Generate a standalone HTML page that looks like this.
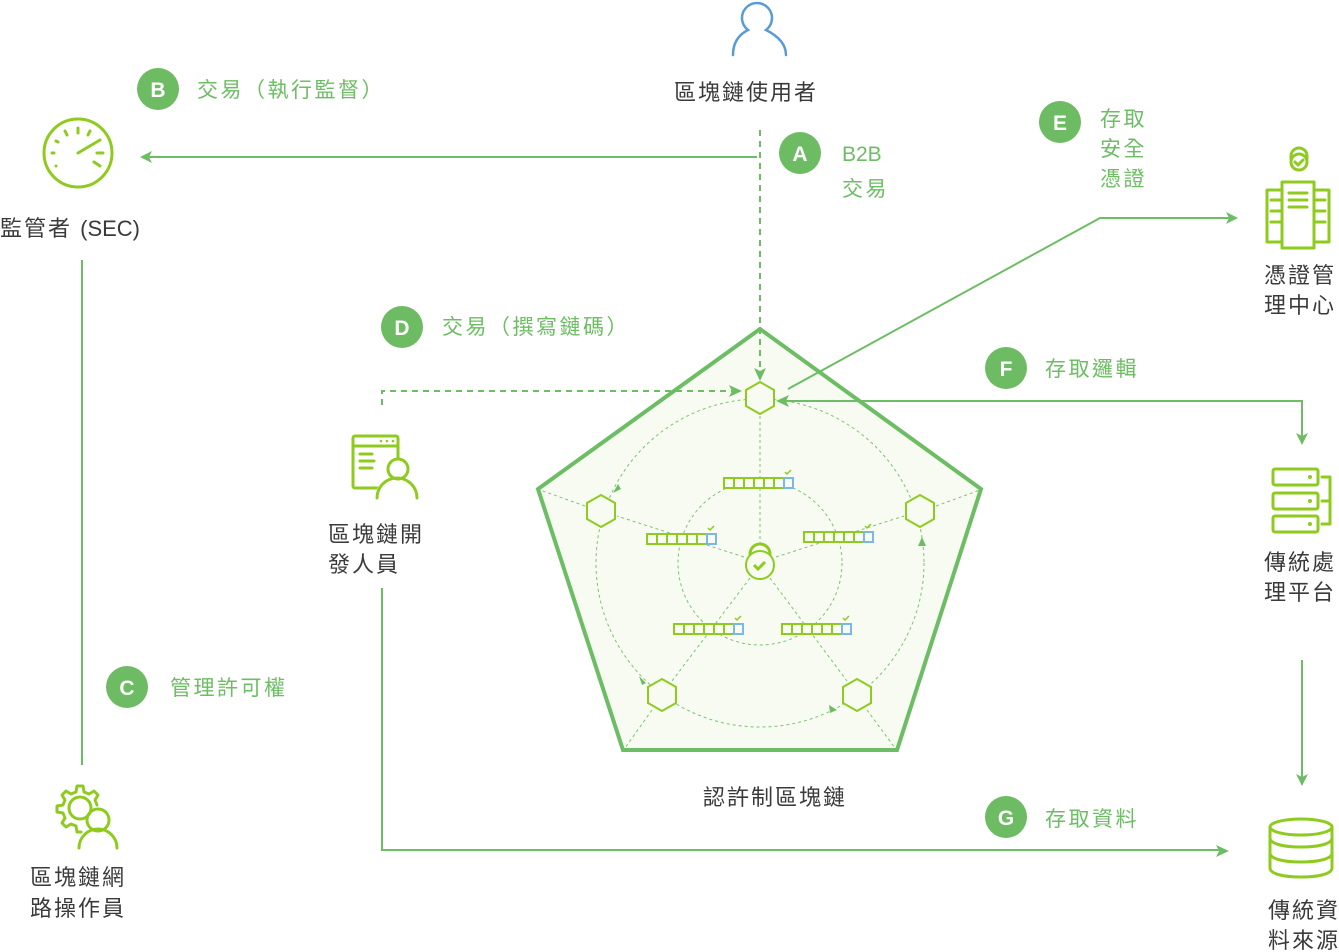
<!DOCTYPE html>
<html><head><meta charset="utf-8"><style>
html,body{margin:0;padding:0;background:#fff;width:1339px;height:952px;overflow:hidden}
svg{display:block}
text{font-family:"Liberation Sans","Noto Sans CJK TC",sans-serif}
.d{fill:#3a3a3a;font-size:22px;letter-spacing:2px}
.g{fill:#6cbd63;font-size:21px;letter-spacing:2.5px}
.bt{fill:#fff;font-size:21px;font-weight:bold;text-anchor:middle}
.ic{fill:none;stroke:#8fcb1f;stroke-width:3;stroke-linecap:round;stroke-linejoin:round}
.ln{fill:none;stroke:#6cbd63;stroke-width:2}
.ds{fill:none;stroke:#6cbd63;stroke-width:2;stroke-dasharray:6 5}
.th{fill:none;stroke:#7cc46f;stroke-width:1;stroke-dasharray:3 3}
.hx{fill:#f7fbf2;stroke:#8fcb1f;stroke-width:2}
.ar{fill:#6cbd63}
</style></head><body>
<svg width="1339" height="952" viewBox="0 0 1339 952">
<polygon points="760,329 981,489 897,750 623,750 538,489" fill="#f7fbf2" stroke="#6cbd63" stroke-width="4"/>
<circle cx="760" cy="563" r="82" class="th"/>
<circle cx="760" cy="563" r="164" class="th"/>
<g class="th">
<line x1="760" y1="545" x2="760" y2="414"/>
<line x1="744" y1="557" x2="617" y2="516"/>
<line x1="776" y1="557" x2="904" y2="516"/>
<line x1="750" y1="578" x2="672" y2="681"/>
<line x1="770" y1="578" x2="847" y2="681"/>
<line x1="585" y1="506" x2="540" y2="490"/>
<line x1="936" y1="506" x2="980" y2="490"/>
<line x1="652" y1="710" x2="625" y2="748"/>
<line x1="867" y1="710" x2="895" y2="748"/>
</g>
<polygon class="ar" points="613,493 618,484 621,489"/>
<polygon class="ar" points="922,537 918,546 926,546"/>
<polygon class="ar" points="646,683 639,676 642,685"/>
<polygon class="ar" points="837,710 829,705 830,713"/>
<g class="hx">
<polygon points="760,382 774,390 774,406 760,414 746,406 746,390"/>
<polygon points="601,495 615,503 615,519 601,527 587,519 587,503"/>
<polygon points="920,495 934,503 934,519 920,527 906,519 906,503"/>
<polygon points="662,679 676,687 676,703 662,711 648,703 648,687"/>
<polygon points="857,679 871,687 871,703 857,711 843,703 843,687"/>
</g>
<path d="M750,560 v-6 a10,10 0 0 1 20,0 v6" fill="none" stroke="#8fcb1f" stroke-width="3"/>
<circle cx="760" cy="565" r="14" fill="#f7fbf2" stroke="#8fcb1f" stroke-width="2"/>
<path d="M754,565 l4,4 l7,-7" fill="none" stroke="#8fcb1f" stroke-width="3"/>
<defs>
<g id="ch">
<rect x="0" y="0" width="69" height="10" fill="#f7fbf2"/>
<rect x="0" y="0" width="60" height="10" fill="none" stroke="#8fcb1f" stroke-width="2"/>
<path d="M10,0v10M20,0v10M30,0v10M40,0v10M50,0v10" stroke="#8fcb1f" stroke-width="2"/>
<rect x="60" y="0" width="9" height="10" fill="none" stroke="#7ab8e8" stroke-width="2"/>
<path d="M61,-6 l2,2 l4,-4" fill="none" stroke="#8fcb1f" stroke-width="1.5"/>
</g>
</defs>
<use href="#ch" x="724" y="478"/>
<use href="#ch" x="647" y="534"/>
<use href="#ch" x="804" y="532"/>
<use href="#ch" x="674" y="624"/>
<use href="#ch" x="782" y="624"/>

<line class="ln" x1="757" y1="157" x2="146" y2="157"/>
<polygon class="ar" points="140,157 152,151 149,157 152,163"/>
<line class="ds" x1="760" y1="130" x2="760" y2="372"/>
<polygon class="ar" points="760,381 754,368 760,371 766,368"/>
<path class="ds" d="M382,405 V391 H732"/>
<polygon class="ar" points="742,391 729,385 732,391 729,397"/>
<path class="ln" d="M788,389 L1100,218 H1230"/>
<polygon class="ar" points="1238,218 1226,212 1229,218 1226,224"/>
<path class="ln" d="M784,401 H1302 V437"/>
<polygon class="ar" points="776,401 789,395 786,401 789,407"/>
<polygon class="ar" points="1302,445 1296,433 1302,436 1308,433"/>
<line class="ln" x1="1302" y1="660" x2="1302" y2="778"/>
<polygon class="ar" points="1302,786 1296,774 1302,777 1308,774"/>
<path class="ln" d="M382,588 V850 H1220"/>
<polygon class="ar" points="1229,851 1216,845 1219,851 1216,857"/>
<line class="ln" x1="82" y1="260" x2="82" y2="765"/>

<g fill="#6dbb63">
<circle cx="158" cy="89" r="21"/><circle cx="800" cy="153" r="21"/><circle cx="1060" cy="122" r="21"/>
<circle cx="402" cy="327" r="21"/><circle cx="1006" cy="368" r="21"/><circle cx="127" cy="687" r="21"/><circle cx="1006" cy="817" r="21"/>
</g>
<text class="bt" x="158" y="97">B</text><text class="bt" x="800" y="161">A</text><text class="bt" x="1060" y="130">E</text>
<text class="bt" x="402" y="335">D</text><text class="bt" x="1006" y="376">F</text><text class="bt" x="127" y="695">C</text><text class="bt" x="1006" y="825">G</text>
<text class="g" x="197" y="97">交易（執行監督）</text>
<text class="g" x="842" y="161" style="letter-spacing:0">B2B</text><text class="g" x="842" y="196">交易</text>
<text class="g" x="1100" y="126">存取</text><text class="g" x="1100" y="156">安全</text><text class="g" x="1100" y="186">憑證</text>
<text class="g" x="442" y="334">交易（撰寫鏈碼）</text>
<text class="g" x="1045" y="376">存取邏輯</text>
<text class="g" x="170" y="695">管理許可權</text>
<text class="g" x="1045" y="826">存取資料</text>

<text class="d" x="674" y="100">區塊鏈使用者</text>
<text class="d" x="0" y="236">監管者 <tspan style="letter-spacing:0">(SEC)</tspan></text>
<text class="d" x="328" y="542">區塊鏈開</text><text class="d" x="328" y="572">發人員</text>
<text class="d" x="703" y="805">認許制區塊鏈</text>
<text class="d" x="30" y="885">區塊鏈網</text><text class="d" x="30" y="916">路操作員</text>
<text class="d" x="1264" y="283">憑證管</text><text class="d" x="1264" y="313">理中心</text>
<text class="d" x="1264" y="570">傳統處</text><text class="d" x="1264" y="600">理平台</text>
<text class="d" x="1268" y="918">傳統資</text><text class="d" x="1268" y="948">料來源</text>

<g fill="none" stroke="#5b9bd5" stroke-width="2.5" stroke-linecap="round">
<path d="M733,55 C733,43 738,35 748,30 A15,15 0 1 1 766,30 C776,35 786,43 786,55"/>
</g>
<g class="ic">
<circle cx="78" cy="153" r="34"/>
<line x1="78" y1="153" x2="100" y2="140"/>
<line x1="78" y1="128" x2="78" y2="133"/><line x1="90" y1="131" x2="88" y2="135"/>
<line x1="65" y1="131" x2="67" y2="135"/><line x1="56" y1="141" x2="58" y2="142"/>
<line x1="52" y1="153" x2="54" y2="153"/><line x1="56" y1="166" x2="56" y2="166"/>
<line x1="97" y1="153" x2="103" y2="153"/><line x1="94" y1="162" x2="100" y2="166"/>
</g>
<g class="ic" stroke-width="2.5">
<path d="M97,805 l-2,-5 l3,-5 l-4,-4 l-5,3 l-5,-2 l-1,-6 h-6 l-1,6 l-5,2 l-5,-3 l-4,4 l3,5 l-2,5 l-6,1 v6 l6,1 l2,5 l-3,5 l4,4 l5,-3 l5,2 l1,6 h4"/>
<circle cx="80" cy="808" r="11"/>
<circle cx="98" cy="820" r="11"/>
<path d="M79,848 a19,19 0 0 1 38,0"/>
</g>
<g class="ic" stroke-width="2.5">
<rect x="353" y="436" width="45" height="52" rx="2"/>
<line x1="353" y1="446" x2="398" y2="446"/>
<line x1="360" y1="454" x2="372" y2="454"/><line x1="360" y1="461" x2="374" y2="461"/><line x1="360" y1="468" x2="372" y2="468"/>
</g>
<circle cx="398" cy="469" r="11" fill="#fff"/>
<path d="M374,500 a22,22 0 0 1 44,0 z" fill="#fff"/>
<g class="ic" stroke-width="2.5">
<circle cx="398" cy="469" r="10"/>
<path d="M377,498 a20,20 0 0 1 40,0"/>
</g>
<g fill="#8fcb1f"><circle cx="381" cy="441" r="1.3"/><circle cx="387" cy="441" r="1.3"/><circle cx="393" cy="441" r="1.3"/></g>
<g class="ic" stroke-width="2.5">
<path d="M1291,159 v-3 a8,8 0 0 1 16,0 v3"/>
<circle cx="1299" cy="162" r="8"/>
<path d="M1295,162 l3,3 l5,-5"/>
<rect x="1267" y="190" width="62" height="52"/>
<rect x="1282" y="182" width="32" height="66" fill="#fff"/>
<path d="M1289,193h18M1289,200h18M1289,207h18M1271,200h11M1271,211h11M1314,200h11M1314,211h11M1271,222h11M1314,222h11"/>
</g>
<g class="ic" stroke-width="2.5">
<rect x="1273" y="469" width="45" height="16" rx="2"/>
<rect x="1273" y="493" width="45" height="16" rx="2"/>
<rect x="1273" y="516" width="45" height="16" rx="2"/>
<path d="M1322,477 h8 v47 h-8 M1322,501 h8"/>
</g>
<g fill="#8fcb1f"><circle cx="1310" cy="477" r="2"/><circle cx="1310" cy="501" r="2"/><circle cx="1310" cy="524" r="2"/></g>
<g class="ic" stroke-width="3">
<ellipse cx="1301" cy="827" rx="31" ry="8"/>
<path d="M1270,838 c0,6 14,9 31,9 s31,-3 31,-9 M1270,853 c0,6 14,9 31,9 s31,-3 31,-9 M1270,868 c0,6 14,9 31,9 s31,-3 31,-9 M1270,827 v41 M1332,827 v41"/>
</g>
</svg>
</body></html>
